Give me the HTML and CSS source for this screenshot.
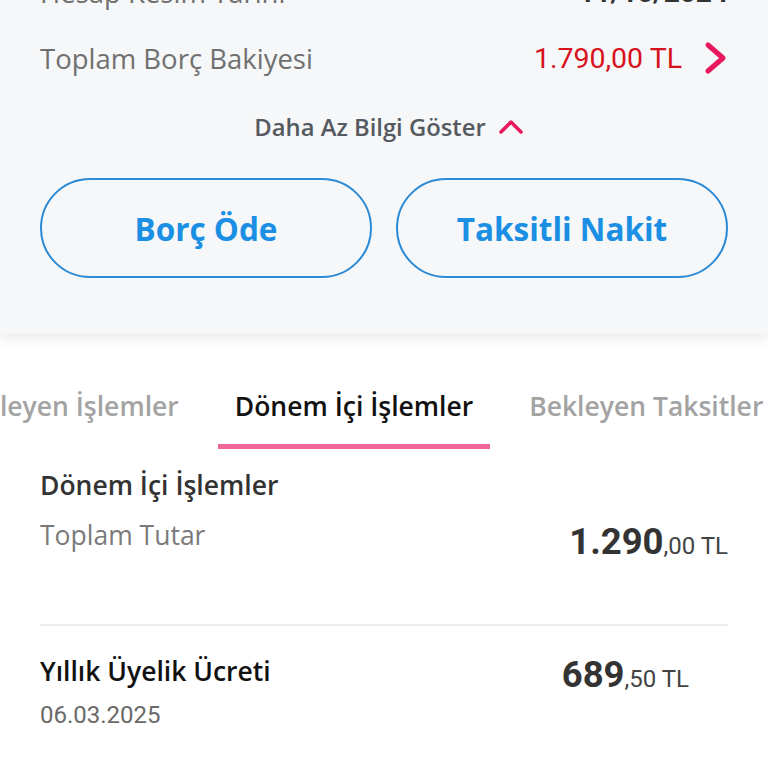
FILE: index.html
```html
<!DOCTYPE html>
<html lang="tr">
<head>
<meta charset="utf-8">
<title>Kart Detayı</title>
<link rel="stylesheet" href="styles.css">
</head>
<body>
<div class="summary">
  <div class="row">
    <span class="label">Hesap Kesim Tarihi</span>
    <span class="value-date">11/10/2024</span>
  </div>
  <div class="row">
    <span class="label">Toplam Borç Bakiyesi</span>
    <span class="value-debt">1.790,00 TL
      <svg class="chev" width="24" height="36" viewBox="0 0 24 36"><path d="M4 5 L19 18 L4 31" fill="none" stroke="#e8185c" stroke-width="5" stroke-linecap="round" stroke-linejoin="round"/></svg>
    </span>
  </div>
  <div class="toggle">
    <span>Daha Az Bilgi Göster</span>
    <svg width="26" height="18" viewBox="0 0 26 18"><path d="M3 14 L13 4 L23 14" fill="none" stroke="#e8185c" stroke-width="3.5" stroke-linecap="round" stroke-linejoin="round"/></svg>
  </div>
  <div class="actions">
    <button class="pill">Borç Öde</button>
    <button class="pill">Taksitli Nakit</button>
  </div>
</div>

<div class="tabs">
  <div class="tabs-track">
    <div class="tab">Bekleyen İşlemler</div>
    <div class="tab active">Dönem İçi İşlemler</div>
    <div class="tab">Bekleyen Taksitler</div>
  </div>
</div>

<div class="content">
  <h2 class="section-title">Dönem İçi İşlemler</h2>
  <div class="total">
    <span class="muted">Toplam Tutar</span>
    <span class="amount big"><b>1.290</b><small>,00 TL</small></span>
  </div>
  <div class="divider"></div>
  <div class="item">
    <div class="item-left">
      <div class="item-title">Yıllık Üyelik Ücreti</div>
      <div class="item-date">06.03.2025</div>
    </div>
    <span class="amount item-amount"><b>689</b><small>,50 TL</small></span>
  </div>
</div>
</body>
</html>
```

FILE: styles.css
```css
* { box-sizing: border-box; }
html, body { margin: 0; padding: 0; }
body {
  width: 768px;
  height: 768px;
  overflow: hidden;
  background: #ffffff;
  font-family: "Open Sans", "Noto Sans", sans-serif;
  color: #222;
}

.summary {
  background: #f5f7f9;
  margin-top: -41px;
  padding: 0 40px 56px;
  box-shadow: 0 4px 12px rgba(0, 0, 0, 0.09);
  position: relative;
  z-index: 1;
}
.row {
  height: 66px;
  display: flex;
  align-items: center;
  justify-content: space-between;
}
.label {
  font-size: 27.5px;
  color: #707070;
}
.value-date {
  font-family: Roboto, sans-serif;
  font-weight: 700;
  font-size: 28px;
  color: #333;
}
.value-debt {
  display: flex;
  align-items: center;
  gap: 22px;
  font-family: Roboto, sans-serif;
  font-size: 28.5px;
  color: #d8121c;
}
.chev { display: block; }

.toggle {
  height: 72px;
  display: flex;
  align-items: center;
  justify-content: center;
  gap: 12px;
  padding-left: 10px;
  font-size: 23.8px;
  font-weight: 600;
  color: #555a60;
}
.toggle svg { display: block; }

.actions {
  margin-top: 15px;
  display: grid;
  grid-template-columns: 1fr 1fr;
  gap: 24px;
}
.pill {
  height: 100px;
  border: 2px solid #2b8ad6;
  border-radius: 50px;
  background: transparent;
  font-family: "Open Sans", sans-serif;
  font-size: 31.5px;
  font-weight: 700;
  color: #1a8fe3;
}

.tabs {
  overflow: hidden;
  height: 116px;
}
.tabs-track {
  display: flex;
  gap: 22px;
  margin-left: -65px;
  padding-top: 53px;
  white-space: nowrap;
}
.tab {
  padding: 0 17px 19px;
  font-size: 26.5px;
  font-weight: 600;
  color: #a3a3a3;
  line-height: 38px;
  border-bottom: 5px solid transparent;
}
.tab.active {
  color: #111;
  border-bottom-color: #f2679a;
}

.content {
  padding: 0 40px;
}
.section-title {
  margin: 17px 0 0;
  font-size: 26.5px;
  font-weight: 600;
  line-height: 36px;
  color: #333;
}
.total {
  margin-top: 14px;
  display: flex;
  justify-content: space-between;
  align-items: flex-start;
}
.muted {
  font-size: 26.5px;
  color: #7a7a7a;
  line-height: 36px;
}
.amount {
  font-family: Roboto, sans-serif;
  color: #333;
  white-space: nowrap;
}
.amount b { font-weight: 700; font-size: 36.5px; }
.amount small { font-size: 24px; color: #444; }
.big { margin-top: 3px; }

.divider {
  margin-top: 61px;
  height: 2px;
  background: #ececec;
}

.item {
  margin-top: 27px;
  display: flex;
  justify-content: space-between;
  align-items: flex-start;
}
.item-title {
  font-size: 26.5px;
  font-weight: 600;
  color: #111;
  line-height: 36px;
}
.item-date {
  margin-top: 12px;
  font-family: Roboto, sans-serif;
  font-size: 24px;
  color: #6a6a6a;
}
.item-amount {
  margin-right: 39px;
  margin-top: 0;
}
```
